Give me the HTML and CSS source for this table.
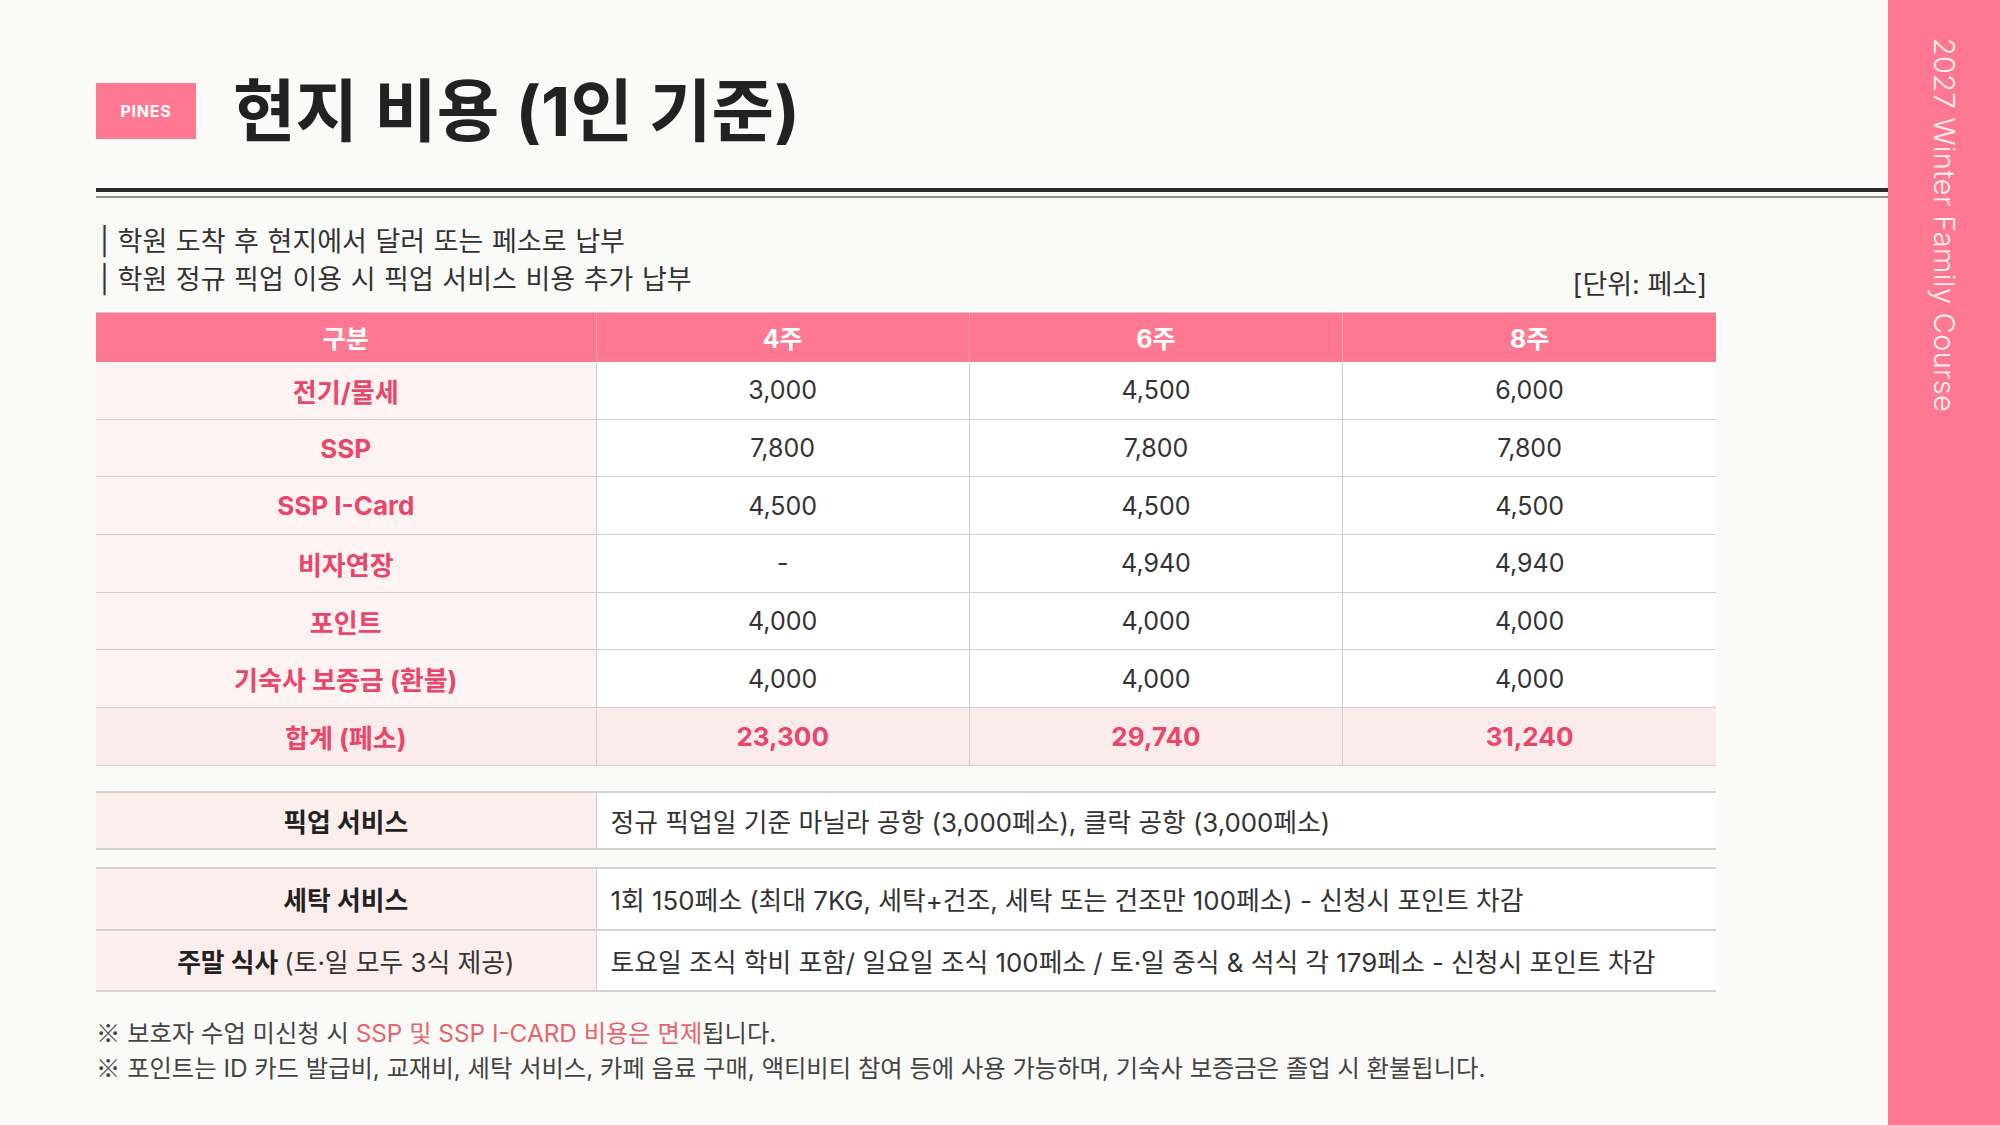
FILE: index.html
```html
<!DOCTYPE html>
<html lang="ko">
<head>
<meta charset="utf-8">
<title>현지 비용 (1인 기준)</title>
<link rel="stylesheet" href="styles.css">
</head>
<body>
<div class="page">
  <main class="main">
    <header class="head">
      <div class="badge">PINES</div>
      <h1 class="title">현지 비용 (1인 기준)</h1>
    </header>
    <div class="rule"></div>
    <div class="notes-row">
      <div class="notes">
        <p>| 학원 도착 후 현지에서 달러 또는 페소로 납부</p>
        <p>| 학원 정규 픽업 이용 시 픽업 서비스 비용 추가 납부</p>
      </div>
      <div class="unit">[단위: 페소]</div>
    </div>
    <table class="cost">
      <colgroup><col class="c-label"><col><col><col></colgroup>
      <thead>
        <tr><th>구분</th><th>4주</th><th>6주</th><th>8주</th></tr>
      </thead>
      <tbody>
        <tr><td class="label">전기/물세</td><td>3,000</td><td>4,500</td><td>6,000</td></tr>
        <tr><td class="label">SSP</td><td>7,800</td><td>7,800</td><td>7,800</td></tr>
        <tr><td class="label">SSP I-Card</td><td>4,500</td><td>4,500</td><td>4,500</td></tr>
        <tr><td class="label">비자연장</td><td>-</td><td>4,940</td><td>4,940</td></tr>
        <tr><td class="label">포인트</td><td>4,000</td><td>4,000</td><td>4,000</td></tr>
        <tr><td class="label">기숙사 보증금 (환불)</td><td>4,000</td><td>4,000</td><td>4,000</td></tr>
        <tr class="total"><td class="label">합계 (페소)</td><td>23,300</td><td>29,740</td><td>31,240</td></tr>
      </tbody>
    </table>
    <table class="svc svc-pickup">
      <colgroup><col class="c-label"><col></colgroup>
      <tr class="r-pickup"><td class="svc-label">픽업 서비스</td><td class="svc-text">정규 픽업일 기준 마닐라 공항 (3,000페소), 클락 공항 (3,000페소)</td></tr>
    </table>
    <table class="svc svc-more">
      <colgroup><col class="c-label"><col></colgroup>
      <tr class="r-laundry"><td class="svc-label">세탁 서비스</td><td class="svc-text">1회 150페소 (최대 7KG, 세탁+건조, 세탁 또는 건조만 100페소) - 신청시 포인트 차감</td></tr>
      <tr class="r-meal"><td class="svc-label">주말 식사 <span class="light">(토·일 모두 3식 제공)</span></td><td class="svc-text">토요일 조식 학비 포함/ 일요일 조식 100페소 / 토·일 중식 &amp; 석식 각 179페소 - 신청시 포인트 차감</td></tr>
    </table>
    <div class="foot">
      <p><span class="mark">※</span> 보호자 수업 미신청 시 <span class="red">SSP 및 SSP I-CARD 비용은 면제</span>됩니다.</p>
      <p><span class="mark">※</span> 포인트는 ID 카드 발급비, 교재비, 세탁 서비스, 카페 음료 구매, 액티비티 참여 등에 사용 가능하며, 기숙사 보증금은 졸업 시 환불됩니다.</p>
    </div>
  </main>
  <aside class="side"><span class="side-text">2027 Winter Family Course</span></aside>
</div>
</body>
</html>
```
FILE: styles.css
```css
* { box-sizing: border-box; }
html, body { margin: 0; padding: 0; }
body {
  background: #fafaf8;
  font-family: Inter, "Noto Sans CJK KR", sans-serif;
  color: #333;
}
.page {
  display: flex;
  width: 2000px;
  height: 1125px;
  overflow: hidden;
}
.main {
  width: 1888px;
  padding-left: 96px;
  display: flex;
  flex-direction: column;
}
.head {
  margin-top: 83px;
  height: 56px;
  display: flex;
  align-items: center;
  gap: 37px;
}
.badge {
  width: 100px;
  height: 56px;
  background: #ff7891;
  color: #fff;
  font-family: Inter, sans-serif;
  font-weight: 700;
  font-size: 16px;
  letter-spacing: 0.8px;
  display: flex;
  align-items: center;
  justify-content: center;
}
.title {
  margin: 0;
  font-size: 68px;
  line-height: 56px;
  font-weight: 700;
  color: #222;
}
.rule {
  margin-top: 49px;
  height: 10px;
  border-top: 4px solid #2b2b2b;
  border-bottom: 2px solid #8e8e8e;
}
.notes-row {
  margin-top: 25px;
  width: 1611px;
  display: flex;
  justify-content: space-between;
  align-items: flex-end;
}
.notes { padding-left: 4px; }
.notes p {
  margin: 0;
  font-size: 27px;
  line-height: 38px;
  color: #333;
  word-spacing: 1px;
}
.unit {
  font-size: 27px;
  line-height: 38px;
  color: #333;
  margin-bottom: -5px;
}
table {
  border-collapse: collapse;
  table-layout: fixed;
  width: 1620px;
}
col.c-label { width: 500px; }
.cost { margin-top: 13px; }
.cost th {
  height: 49px;
  padding: 0;
  background: #ff7891;
  color: #fff;
  font-size: 25px;
  font-weight: 700;
  border-top: 1px solid #d9c4c7;
  border-left: 1px solid #e7a7b2;
}
.cost th:first-child { border-left: none; }
.cost tbody tr { height: 57.7px; }
.cost td {
  padding: 0;
  text-align: center;
  font-size: 25px;
  color: #333;
  background: #fff;
  border-bottom: 1px solid #cfcfcf;
  border-left: 1px solid #cfcfcf;
}
.cost td.label {
  border-left: none;
  background: #fdf3f2;
  color: #e8466a;
  font-weight: 700;
  font-size: 26px;
}
.cost tr.total td {
  background: #fcebeb;
  color: #e8466a;
  font-weight: 700;
}
.cost tr.total td:not(.label) { font-size: 26px; }
.svc {
  border-top: 2px solid #d2d2d2;
}
.svc-pickup { margin-top: 25px; }
.svc-more { margin-top: 17px; }
.svc td {
  padding: 0;
  border-bottom: 2px solid #d2d2d2;
  font-size: 25.8px;
}
.r-pickup { height: 57px; }
.r-laundry { height: 62px; }
.r-meal { height: 61px; }
.svc-label {
  background: #fdeeee;
  text-align: center;
  font-weight: 700;
  color: #222;
}
.svc-label .light { font-weight: 400; color: #333; }
.svc-text {
  background: #fff;
  border-left: 1px solid #cfcfcf;
  padding-left: 14px !important;
  color: #333;
}
.foot {
  margin-top: 23px;
}
.foot p {
  margin: 0;
  font-size: 24.3px;
  line-height: 34.5px;
  color: #444;
}
.foot .mark { font-family: "Noto Sans CJK KR", sans-serif; }
.foot .red { color: #e8636c; }
.side {
  width: 112px;
  height: 1125px;
  background: #ff7891;
  display: flex;
  justify-content: center;
  padding-top: 38px;
}
.side-text {
  writing-mode: vertical-rl;
  font-family: Inter, sans-serif;
  font-weight: 300;
  font-size: 29px;
  color: #fff2f4;
  letter-spacing: 0.3px;
}
```
